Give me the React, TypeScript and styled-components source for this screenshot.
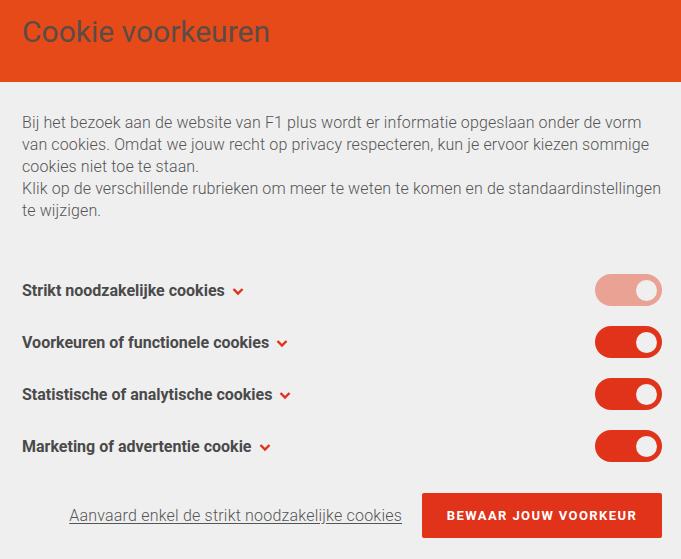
import React, { useState } from "react";
import styled, { createGlobalStyle } from "styled-components";

const GlobalStyle = createGlobalStyle`
	html, body {
		margin: 0;
		padding: 0;
		background: #efefef;
	}
	body {
		font-family: Roboto, "Liberation Sans", Arial, sans-serif;
	}
`;

const Modal = styled.div`
	width: 681px;
	height: 559px;
	background: #efefef;
	display: flex;
	flex-direction: column;
`;

const Header = styled.header`
	height: 82px;
	background: #e64a19;
	display: flex;
	align-items: flex-start;
	padding: 13px 22px 0;
	box-sizing: border-box;
`;

const Title = styled.h1`
	margin: 0;
	font-size: 30px;
	font-weight: 400;
	color: #5c4c44;
	line-height: 38px;
`;

const Body = styled.div`
	padding: 30px 19px 0 22px;
`;

const Intro = styled.p`
	margin: 0 -5px 0 0;
	font-size: 16px;
	font-weight: 300;
	letter-spacing: 0.12px;
	line-height: 22px;
	color: #555;
`;

const List = styled.div`
	margin-top: 52px;
	display: flex;
	flex-direction: column;
	gap: 20px;
`;

const Row = styled.div`
	display: flex;
	align-items: center;
	justify-content: space-between;
	height: 32px;
`;

const Label = styled.button`
	display: flex;
	align-items: center;
	gap: 6px;
	border: 0;
	background: none;
	padding: 0;
	font-family: inherit;
	font-size: 16px;
	font-weight: 700;
	color: #4a4a4a;
	cursor: pointer;
`;

const Chevron = styled.svg`
	width: 14px;
	height: 14px;
	stroke: #e0311a;
	fill: none;
	stroke-width: 2.4;
	margin-top: 1px;
`;

const Switch = styled.button<{ $on: boolean; $locked?: boolean }>`
	width: 67px;
	height: 32px;
	border: 0;
	border-radius: 16px;
	padding: 0 5px;
	background: ${(p) => (p.$locked ? "#eaa295" : p.$on ? "#e0331a" : "#c9c9c9")};
	display: flex;
	align-items: center;
	justify-content: ${(p) => (p.$on ? "flex-end" : "flex-start")};
	cursor: ${(p) => (p.$locked ? "default" : "pointer")};
`;

const Knob = styled.span`
	width: 21px;
	height: 21px;
	border-radius: 50%;
	background: #efefef;
`;

const Footer = styled.div`
	margin-top: 31px;
	display: flex;
	align-items: center;
	justify-content: flex-end;
	gap: 20px;
`;

const TextLink = styled.a`
	font-size: 16px;
	font-weight: 300;
	letter-spacing: 0.2px;
	color: #555;
	text-decoration: underline;
	text-underline-offset: 2px;
	cursor: pointer;
`;

const SaveButton = styled.button`
	width: 240px;
	height: 45px;
	border: 0;
	border-radius: 2px;
	background: #e0331a;
	color: #fff;
	font-family: inherit;
	font-size: 13px;
	font-weight: 700;
	letter-spacing: 1.4px;
	text-transform: uppercase;
	cursor: pointer;
`;

const categories = [
	{ label: "Strikt noodzakelijke cookies", locked: true },
	{ label: "Voorkeuren of functionele cookies" },
	{ label: "Statistische of analytische cookies" },
	{ label: "Marketing of advertentie cookie" },
];

export default function App() {
	const [state, setState] = useState(categories.map(() => true));

	return (
		<>
			<GlobalStyle />
			<Modal>
				<Header>
					<Title>Cookie voorkeuren</Title>
				</Header>
				<Body>
					<Intro>
						Bij het bezoek aan de website van F1 plus wordt er informatie opgeslaan onder de vorm
						van cookies. Omdat we jouw recht op privacy respecteren, kun je ervoor kiezen sommige
						cookies niet toe te staan.
						<br />
						Klik op de verschillende rubrieken om meer te weten te komen en de standaardinstellingen
						te wijzigen.
					</Intro>
					<List>
						{categories.map((c, i) => (
							<Row key={c.label}>
								<Label>
									{c.label}
									<Chevron viewBox="0 0 14 14">
										<path d="M2.5 5l4.5 4.5L11.5 5" />
									</Chevron>
								</Label>
								<Switch
									$on={state[i]}
									$locked={c.locked}
									onClick={() =>
										!c.locked && setState((s) => s.map((v, j) => (j === i ? !v : v)))
									}
								>
									<Knob />
								</Switch>
							</Row>
						))}
					</List>
					<Footer>
						<TextLink>Aanvaard enkel de strikt noodzakelijke cookies</TextLink>
						<SaveButton>Bewaar jouw voorkeur</SaveButton>
					</Footer>
				</Body>
			</Modal>
		</>
	);
}
